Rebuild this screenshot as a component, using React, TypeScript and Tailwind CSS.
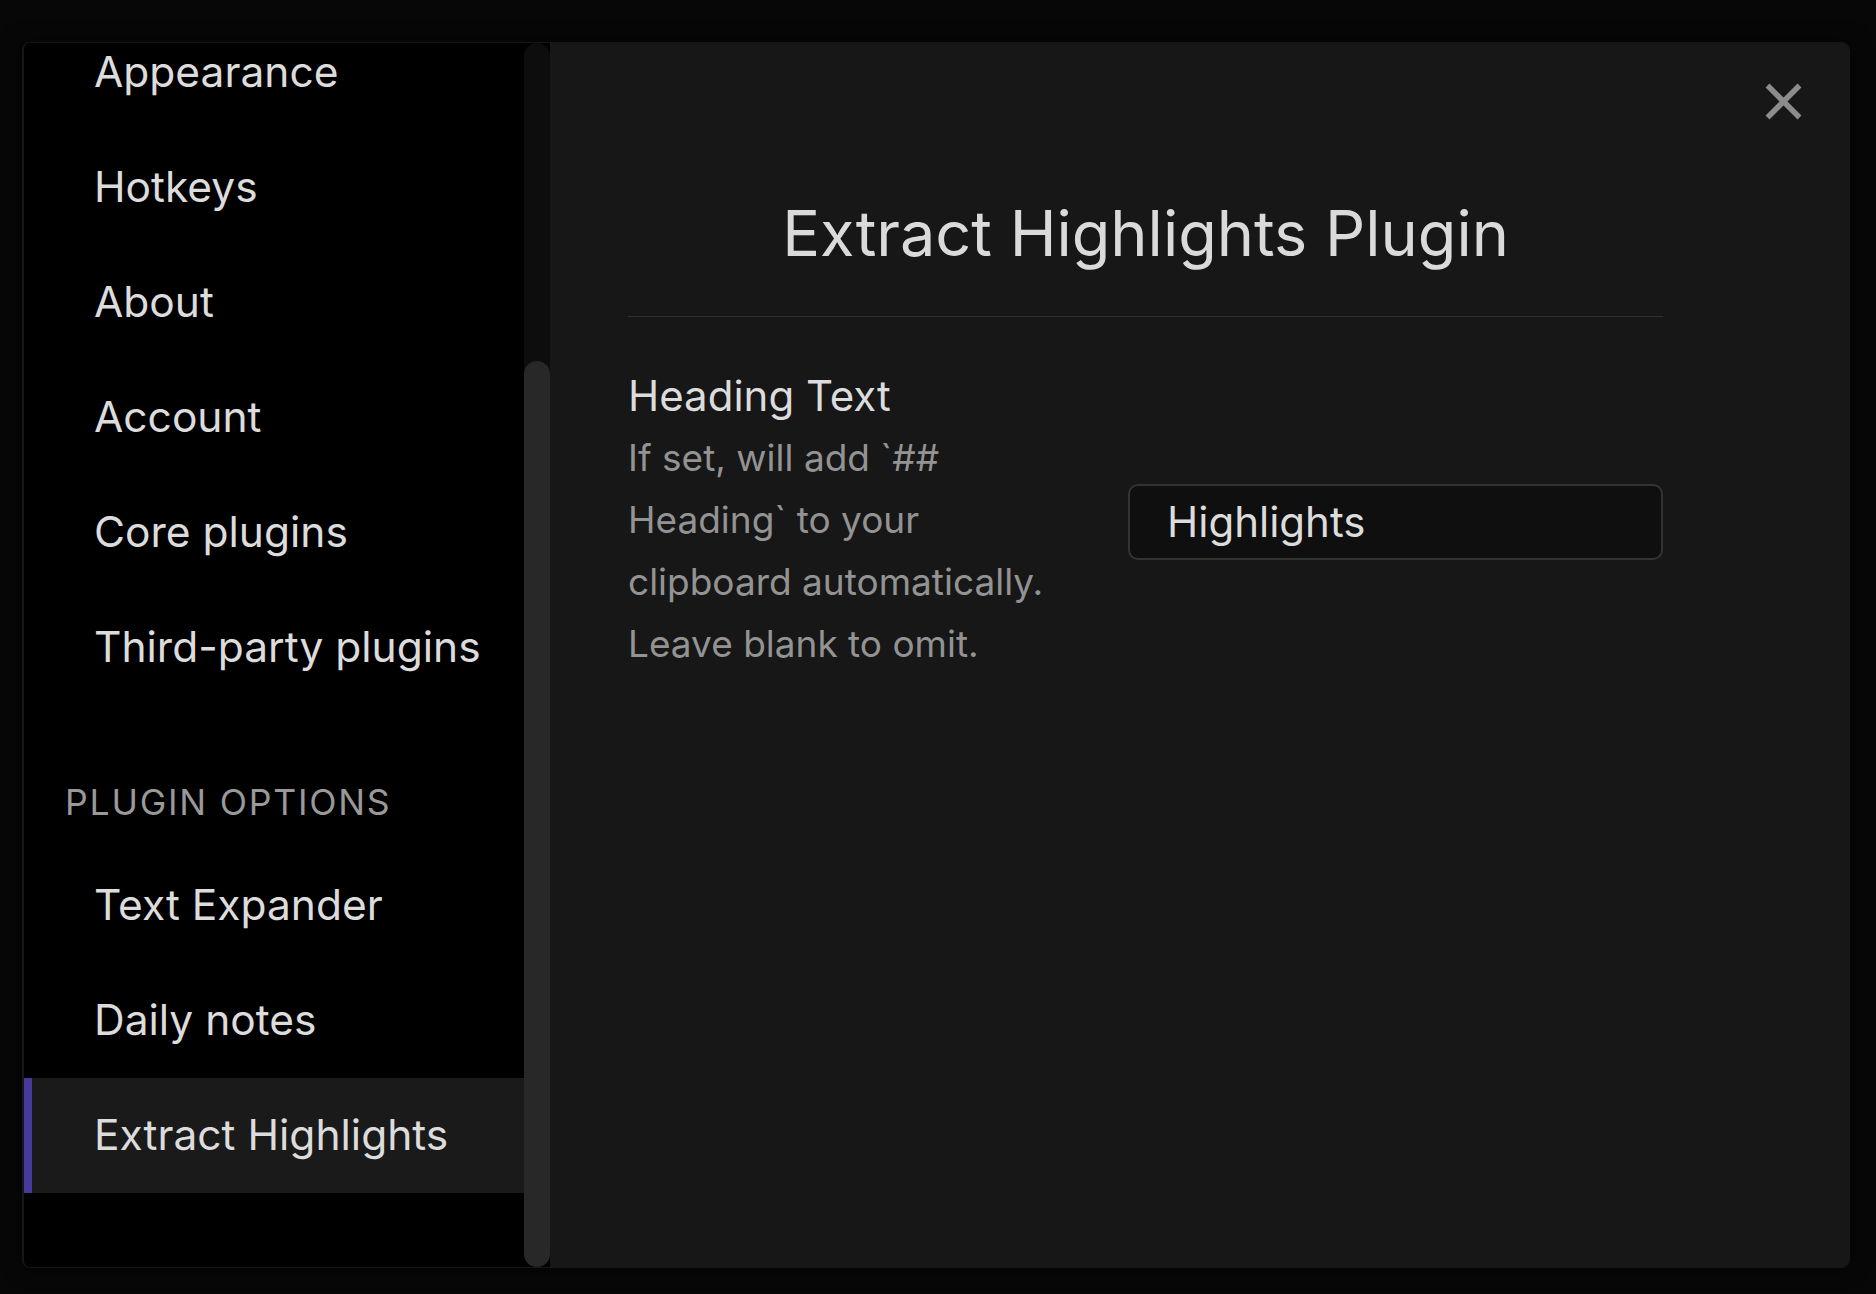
import React from 'react';

const topItems = ['Appearance', 'Hotkeys', 'About', 'Account', 'Core plugins', 'Third-party plugins'];
const pluginItems = ['Text Expander', 'Daily notes', 'Extract Highlights'];
const activeItem = 'Extract Highlights';

const NavItem: React.FC<{ label: string; active?: boolean }> = ({ label, active }) => (
  <div
    className={
      'flex h-[115px] shrink-0 items-center border-l-[8px] pl-[62px] text-[42.5px] leading-none text-[#dcdcdc] whitespace-nowrap ' +
      (active ? 'border-[#483a9c] bg-[#1a1a1a]' : 'border-transparent')
    }
  >
    {label}
  </div>
);

const CloseIcon = () => (
  <svg width="37" height="37" viewBox="0 0 37 37" fill="none">
    <path d="M2.5 2.5 L34.5 34.5 M34.5 2.5 L2.5 34.5" stroke="#8c8c8c" strokeWidth="5.5" />
  </svg>
);

export default function App() {
  return (
    <div
      className="h-[1294px] w-[1876px] bg-[#070707] pl-[22px] pt-[42px]"
      style={{ fontFamily: 'Inter, "Noto Sans", sans-serif' }}
    >
      <div className="flex h-[1226px] w-[1828px] overflow-hidden rounded-[8px] border border-l-2 border-[#161616] bg-black shadow-[0_0_20px_rgba(0,0,0,0.6)]">
        {/* sidebar */}
        <div className="flex w-[526px] shrink-0 bg-black">
          <div className="w-[500px] overflow-hidden">
            <div className="-mt-[28px] flex flex-col">
              {topItems.map((item) => (
                <NavItem key={item} label={item} />
              ))}
              <div className="pl-[41px] pt-[76px] pb-[23px] text-[35.6px] leading-[44px] tracking-[0.05em] text-[#999999] uppercase">
                Plugin options
              </div>
              {pluginItems.map((item) => (
                <NavItem key={item} label={item} active={item === activeItem} />
              ))}
            </div>
          </div>
          <div className="flex w-[26px] flex-col rounded-full bg-[#0d0d0d]">
            <div className="mt-[318px] flex-1 rounded-full bg-[#282828]" />
          </div>
        </div>

        {/* content */}
        <div className="relative flex-1 bg-[#171717] pl-[78px] pt-[150px]">
          <button className="absolute right-[47px] top-[40px]" aria-label="Close">
            <CloseIcon />
          </button>
          <div className="w-[1035px]">
            <h2 className="border-b border-[#303030] pb-[43px] text-center text-[63px] leading-[80px] font-normal text-[#dadada]">
              Extract Highlights Plugin
            </h2>
            <div className="mt-[54px] flex items-center justify-between">
              <div className="w-[440px]">
                <div className="text-[42px] leading-[50px] text-[#dcdcdc]">Heading Text</div>
                <div className="mt-[6px] text-[37px] leading-[62px] text-[#939393]">
                  If set, will add `## Heading` to your clipboard automatically. Leave blank to omit.
                </div>
              </div>
              <input
                type="text"
                defaultValue="Highlights"
                className="-mt-[3px] h-[76px] w-[535px] rounded-[10px] border-2 border-[#333333] bg-[#0f0f0f] pl-[37px] text-[42px] text-[#dcdcdc] outline-none"
              />
            </div>
          </div>
        </div>
      </div>
    </div>
  );
}
